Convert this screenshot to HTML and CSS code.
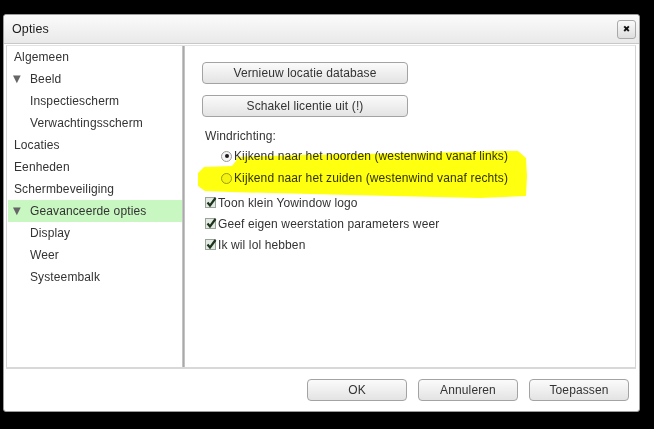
FILE: index.html
```html
<!DOCTYPE html>
<html lang="nl">
<head>
  <meta charset="UTF-8" />
  <title>Opties</title>
  <link rel="stylesheet" href="styles.css">
</head>
<body>
  <div class="dialog">
    <div class="titlebar">
      <span class="title">Opties</span>
      <button class="close">&#x2716;</button>
    </div>

    <div class="panel">
      <ul class="tree">
        <li class="item">Algemeen</li>
        <li class="item parent"><span class="arrow">&#9660;</span>Beeld</li>
        <li class="item sub">Inspectiescherm</li>
        <li class="item sub">Verwachtingsscherm</li>
        <li class="item">Locaties</li>
        <li class="item">Eenheden</li>
        <li class="item">Schermbeveiliging</li>
        <li class="item parent selected"><span class="arrow">&#9660;</span>Geavanceerde opties</li>
        <li class="item sub">Display</li>
        <li class="item sub">Weer</li>
        <li class="item sub">Systeembalk</li>
      </ul>
      <div class="divider"></div>

      <div class="pane">
        <button class="btn wide">Vernieuw locatie database</button>
        <button class="btn wide">Schakel licentie uit (!)</button>

        <div class="label">Windrichting:</div>
        <div class="radios">
          <label class="option"><span class="radio checked"></span>Kijkend naar het noorden (westenwind vanaf links)</label>
          <label class="option"><span class="radio"></span>Kijkend naar het zuiden (westenwind vanaf rechts)</label>
        </div>

        <div class="checks">
          <label class="check-row">
            <span class="checkbox"><svg width="13" height="13" viewBox="0 0 13 13"><path d="M2.5 6.5 L5 9.5 L10.5 2" fill="none" stroke="#1c331c" stroke-width="2.2"/></svg></span>Toon klein Yowindow logo
          </label>
          <label class="check-row">
            <span class="checkbox"><svg width="13" height="13" viewBox="0 0 13 13"><path d="M2.5 6.5 L5 9.5 L10.5 2" fill="none" stroke="#1c331c" stroke-width="2.2"/></svg></span>Geef eigen weerstation parameters weer
          </label>
          <label class="check-row">
            <span class="checkbox"><svg width="13" height="13" viewBox="0 0 13 13"><path d="M2.5 6.5 L5 9.5 L10.5 2" fill="none" stroke="#1c331c" stroke-width="2.2"/></svg></span>Ik wil lol hebben
          </label>
        </div>

        <!-- marker stroke drawn over the screenshot -->
        <svg class="marker" width="450" height="323" viewBox="0 0 450 323">
          <path d="M52 111 L115 109 L235 107 L315 105 L333 105 L341 112 L342 130 L341 150 L295 152 L165 149 L45 146 L20 145 L13 140 L13 127 L19 121 L47 120 L51 115 Z" fill="#ffff10"/>
        </svg>
      </div>
    </div>

    <div class="footer">
      <button class="btn">OK</button>
      <button class="btn">Annuleren</button>
      <button class="btn">Toepassen</button>
    </div>
  </div>
</body>
</html>
```

FILE: styles.css
```css
* {
  box-sizing: border-box;
  margin: 0;
  padding: 0;
}

body {
  background: #000;
  font-family: 'Liberation Sans', Arial, sans-serif;
  font-size: 12px;
  letter-spacing: 0.12px;
  color: #333;
  padding: 14px 0 0 3px;
}

.dialog {
  width: 637px;
  height: 398px;
  background: #fff;
  border: 1px solid #9c9c9c;
  border-radius: 3px;
  display: flex;
  flex-direction: column;
}

.titlebar {
  height: 29px;
  flex: none;
  display: flex;
  align-items: center;
  justify-content: space-between;
  padding: 0 3px 0 8px;
  background: linear-gradient(to bottom, #fbfbfb, #e9e9e9);
  border-bottom: 1px solid #c8c8c8;
  border-radius: 3px 3px 0 0;
}

.title {
  font-size: 12.5px;
  color: #1c1c1c;
}

.close {
  width: 19px;
  height: 19px;
  font-family: 'DejaVu Sans', sans-serif;
  font-size: 9px;
  color: #111;
  background: linear-gradient(to bottom, #fafafa, #dedede);
  border: 1px solid #a9a9a9;
  border-radius: 3px;
  display: flex;
  align-items: center;
  justify-content: center;
}

.panel {
  height: 324px;
  flex: none;
  margin: 1px 3px 0 2px;
  display: flex;
  border-left: 1px solid #d4d4d4;
  border-right: 1px solid #d4d4d4;
  border-bottom: 2px solid #d8d8d8;
  border-top: 1px solid #e2e2e2;
}

.tree {
  list-style: none;
  width: 175px;
  padding: 0 0 0 1px;
}

.item {
  height: 22px;
  line-height: 22px;
  padding-left: 6px;
  white-space: nowrap;
}

.item.parent {
  padding-left: 5px;
}

.item.sub {
  padding-left: 22px;
}

.item.selected {
  background: #c9f7c1;
}

.arrow {
  display: inline-block;
  width: 17px;
  font-family: 'DejaVu Sans', sans-serif;
  font-size: 10px;
  color: #666;
  vertical-align: top;
}

.divider {
  width: 3px;
  flex: none;
  background: #a9a9a9;
  border-left: 1px solid #c4c4c4;
  border-right: 1px solid #c4c4c4;
}

.pane {
  flex: 1;
  position: relative;
  padding: 16px 0 0 17px;
  display: flex;
  flex-direction: column;
  align-items: flex-start;
}

.btn {
  font-family: 'Liberation Sans', Arial, sans-serif;
  font-size: 12px;
  letter-spacing: 0.12px;
  color: #333;
  width: 100px;
  height: 22px;
  background: linear-gradient(to bottom, #fbfbfb, #e3e3e3);
  border: 1px solid #a3a3a3;
  border-radius: 4px;
}

.btn.wide {
  width: 206px;
  margin-bottom: 11px;
}

.label {
  height: 18px;
  line-height: 18px;
  margin: -1px 0 0 3px;
}

.radios {
  display: flex;
  flex-direction: column;
  padding-left: 19px;
}

.option,
.check-row {
  display: flex;
  align-items: center;
  height: 22px;
  white-space: nowrap;
}

.radio {
  width: 11px;
  height: 11px;
  margin-right: 2px;
  border: 1px solid #9a9a9a;
  border-radius: 50%;
  background: #f4f4f4;
  display: flex;
  align-items: center;
  justify-content: center;
}

.radio.checked::after {
  content: '';
  width: 4px;
  height: 4px;
  border-radius: 50%;
  background: #1a1a1a;
}

.checks {
  margin-top: 3px;
  padding-left: 3px;
  display: flex;
  flex-direction: column;
}

.check-row {
  height: 21px;
}

.checkbox {
  position: relative;
  width: 11px;
  height: 11px;
  margin-right: 2px;
  border: 1px solid #9aa39a;
  background: #e3e9e3;
}

.checkbox svg {
  position: absolute;
  left: -1px;
  top: -2px;
}

.marker {
  position: absolute;
  left: 0;
  top: 0;
  mix-blend-mode: multiply;
  pointer-events: none;
}

.footer {
  flex: 1;
  display: flex;
  justify-content: flex-end;
  align-items: flex-start;
  gap: 11px;
  padding: 10px 10px 0 0;
}
```
